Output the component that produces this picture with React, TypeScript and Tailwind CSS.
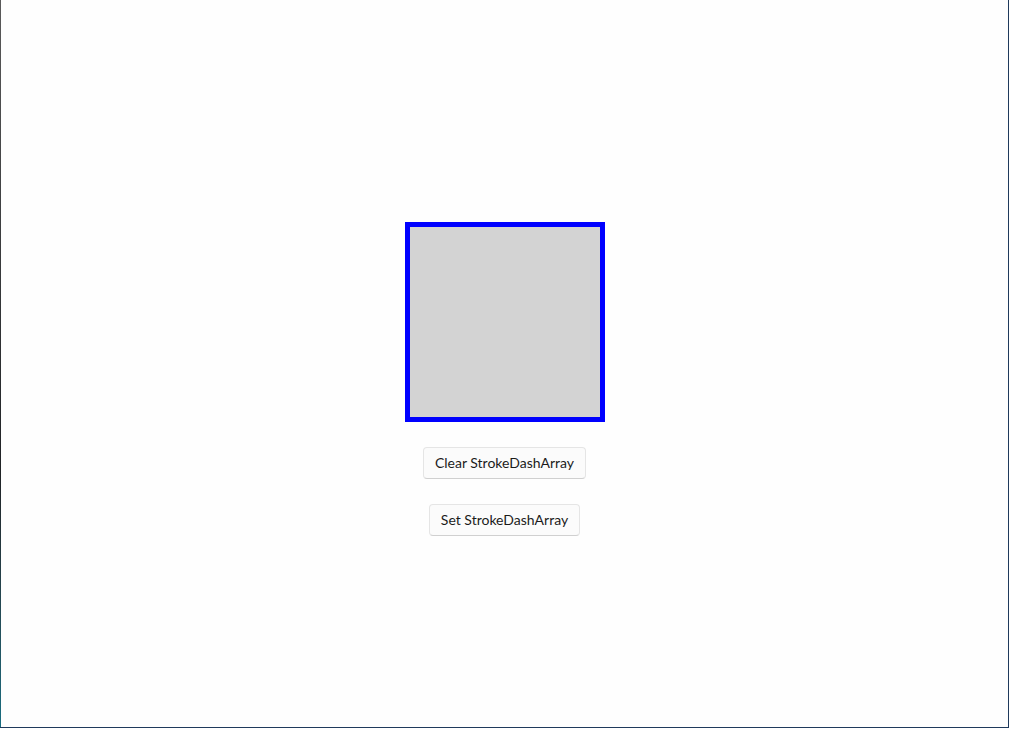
export default function App() {
  return (
    <div className="w-[1010px] h-[729px] bg-white overflow-hidden">
      <div className="flex w-[1009px] h-[728px] border-r border-b border-[#1f3a5c]">
        <div className="w-px h-full bg-gradient-to-b from-[#5a5a5a] via-[#202326] via-65% to-[#176d80]" />
        <div
          className="flex-1 flex flex-col items-center pt-[222px] bg-[#fefefe]"
          style={{ fontFamily: 'Lato, "Noto Sans", sans-serif' }}
        >
          <div className="w-[200px] h-[200px] border-[5px] border-[#0000ff] bg-[#d3d3d3] ml-px" />
          <button className="mt-[25px] h-[32px] px-[11px] rounded-[4px] bg-[#fbfbfb] border border-[#e5e5e5] border-b-[#d0d0d0] text-[14px] text-[#1b1b1b] leading-none">
            Clear StrokeDashArray
          </button>
          <button className="mt-[25px] h-[32px] px-[11px] rounded-[4px] bg-[#fbfbfb] border border-[#e5e5e5] border-b-[#d0d0d0] text-[14px] text-[#1b1b1b] leading-none">
            Set StrokeDashArray
          </button>
        </div>
      </div>
    </div>
  );
}
